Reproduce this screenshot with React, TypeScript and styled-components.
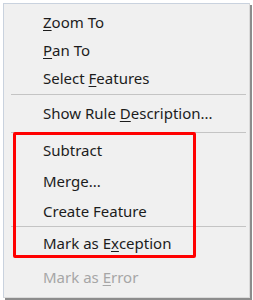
import React, { FC } from 'react'
import styled, { createGlobalStyle } from 'styled-components'

const GlobalStyle = createGlobalStyle`
  html, body {
    margin: 0;
    padding: 0;
    background: #ffffff;
  }
`

interface MenuEntry {
  /* 文字前半段 */
  before?: string
  /* 带下划线的助记字母 */
  key?: string
  /* 文字后半段 */
  after?: string
  /* 行高 */
  height: number
  disabled?: boolean
  separator?: boolean
}

const ENTRIES: MenuEntry[] = [
  { key: 'Z', after: 'oom To', height: 28 },
  { key: 'P', after: 'an To', height: 28 },
  { before: 'Select ', key: 'F', after: 'eatures', height: 28 },
  { separator: true, height: 4 },
  { before: 'Show Rule ', key: 'D', after: 'escription...', height: 34 },
  { separator: true, height: 4 },
  { before: 'Subtract', height: 31 },
  { before: 'Merge...', height: 32 },
  { before: 'Create Feature', height: 27 },
  { separator: true, height: 4 },
  { before: 'Mark as E', key: 'x', after: 'ception', height: 30 },
  { before: 'Mark as ', key: 'E', after: 'rror', height: 38, disabled: true },
]

const Page = styled.div`
  width: 253px;
  height: 300px;
  padding: 3px 0 0 3px;
  box-sizing: border-box;
`

const Menu = styled.div`
  position: relative;
  width: 247px;
  height: 295px;
  box-sizing: border-box;
  background: #f0f0f0;
  border-left: 1px solid #c9d2de;
  border-top: 1px solid #c9d2de;
  border-right: 1px solid #dadada;
  border-bottom: 1px solid #dadada;
  box-shadow: 2px 2px 0 #8c8c8c;
  padding-top: 4px;
  display: flex;
  flex-direction: column;
`

const Item = styled.div<{ $h: number; $disabled?: boolean }>`
  height: ${(p) => p.$h}px;
  display: flex;
  align-items: center;
  padding-left: 39px;
  font-family: 'Noto Sans', 'Open Sans', sans-serif;
  font-size: 15px;
  color: ${(p) => (p.$disabled ? '#a6a6a6' : '#1c1c1c')};
  white-space: pre;
`

const Mnemonic = styled.span`
  text-decoration: underline;
  text-underline-offset: 2px;
`

const Separator = styled.div<{ $h: number }>`
  height: ${(p) => p.$h}px;
  display: flex;
  align-items: center;
  padding: 0 3px 0 7px;

  &::after {
    content: '';
    flex: 1;
    height: 1px;
    background: #c4c4c4;
  }
`

const Highlight = styled.div`
  position: absolute;
  left: 9px;
  top: 128px;
  width: 183px;
  height: 126px;
  box-sizing: border-box;
  border: 3px solid #ff0000;
  border-radius: 2px;
  pointer-events: none;
`

const App: FC = () => {
  return (
    <Page>
      <GlobalStyle />
      <Menu>
        {ENTRIES.map((entry, i) =>
          entry.separator ? (
            <Separator key={i} $h={entry.height} />
          ) : (
            <Item key={i} $h={entry.height} $disabled={entry.disabled}>
              {entry.before}
              {entry.key && <Mnemonic>{entry.key}</Mnemonic>}
              {entry.after}
            </Item>
          ),
        )}
        <Highlight />
      </Menu>
    </Page>
  )
}

export default App
